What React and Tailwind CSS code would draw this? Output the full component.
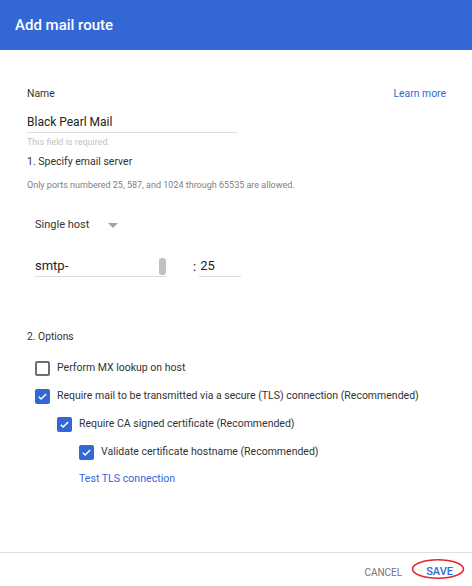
import React from "react";

function Check({ checked }) {
  return checked ? (
    <span className="w-[15px] h-[15px] rounded-[2px] bg-[#3367d6] flex items-center justify-center shrink-0">
      <svg width="11" height="11" viewBox="0 0 24 24">
        <path d="M4 12.5l5 5L20 6.5" fill="none" stroke="white" strokeWidth="3.4" />
      </svg>
    </span>
  ) : (
    <span className="w-[15px] h-[15px] rounded-[2px] border-2 border-[#6e6e6e] shrink-0" />
  );
}

function Option({ checked, indent, children }) {
  return (
    <div className={`h-[28px] flex items-center gap-[7px] ${indent}`}>
      <Check checked={checked} />
      <span className="text-[10.5px] text-[#333] whitespace-nowrap">{children}</span>
    </div>
  );
}

export default function App() {
  return (
    <div className="h-[586px] w-[472px] flex flex-col bg-white font-['Roboto',sans-serif]">
      {/* header */}
      <div className="h-[50px] bg-[#3367d6] flex items-center pl-[15px] shrink-0">
        <h1 className="text-white text-[15px] font-medium">Add mail route</h1>
      </div>

      <main className="flex-1 flex flex-col pl-[27px] pr-[26px]">
        <div className="mt-[34px] h-[20px] flex items-center justify-between">
          <span className="text-[10.4px] text-[#333]">Name</span>
          <a href="#" className="text-[10.4px] text-[#3367d6]">Learn more</a>
        </div>

        <div className="w-[210px] h-[29px] pt-[8px] flex items-center border-b border-[#dcdcdc]">
          <span className="text-[12px] text-[#222]">Black Pearl Mail</span>
        </div>
        <div className="mt-[3px] h-[14px] flex items-center text-[9px] text-[#c2c2c2]">
          This field is required.
        </div>
        <div className="mt-[3px] h-[18px] flex items-center text-[10.5px] text-[#333]">
          1. Specify email server
        </div>
        <div className="mt-[8px] h-[14px] flex items-center text-[9px] text-[#808080]">
          Only ports numbered 25, 587, and 1024 through 65535 are allowed.
        </div>

        <div className="mt-[22px] h-[20px] pl-[8px] flex items-center gap-[19px]">
          <span className="text-[11px] text-[#333]">Single host</span>
          <svg width="10" height="5" viewBox="0 0 10 5">
            <path d="M0 0h10L5 5z" fill="#a3a3a3" />
          </svg>
        </div>

        <div className="mt-[16px] pl-[8px] flex items-end">
          <div className="w-[131px] h-[26px] pt-[5px] flex items-center justify-between border-b border-[#dcdcdc]">
            <span className="text-[13px] text-[#222]">smtp-</span>
            <span className="w-[7px] h-[17px] rounded-[3px] bg-[#c1c1c1]" />
          </div>
          <span className="ml-[27px] h-[26px] pt-[5px] flex items-center text-[13px] text-[#222]">:</span>
          <div className="ml-[3px] w-[42px] h-[26px] pt-[5px] flex items-center border-b border-[#dcdcdc] pl-[1px]">
            <span className="text-[13px] text-[#222]">25</span>
          </div>
        </div>

        <div className="mt-[50px] h-[20px] flex items-center text-[10.3px] text-[#333]">
          2. Options
        </div>

        <div className="mt-[7px] flex flex-col">
          <Option checked={false} indent="pl-[8px]">Perform MX lookup on host</Option>
          <Option checked indent="pl-[8px]">
            Require mail to be transmitted via a secure (TLS) connection (Recommended)
          </Option>
          <Option checked indent="pl-[30px]">Require CA signed certificate (Recommended)</Option>
          <Option checked indent="pl-[52px]">Validate certificate hostname (Recommended)</Option>
        </div>

        <div className="mt-[3px] h-[20px] pl-[52px] flex items-center">
          <a href="#" className="text-[10.6px] text-[#3367d6]">Test TLS connection</a>
        </div>
      </main>

      {/* footer */}
      <div className="h-[34px] shrink-0 border-t border-[#e0e0e0] pt-[5px] pr-[19px] flex items-center justify-end">
        <button className="text-[10px] text-[#757575]">CANCEL</button>
        <div className="relative ml-[24px] h-[16px] flex items-center">
          <button className="text-[11px] text-[#3367d6] font-medium">SAVE</button>
          <svg
            className="absolute left-[-15px] top-[-6px] pointer-events-none"
            width="54"
            height="22"
            viewBox="0 0 54 22"
          >
            <ellipse cx="27" cy="11" rx="25.5" ry="9.2" fill="none" stroke="#e0282d" strokeWidth="1.6" />
          </svg>
        </div>
      </div>
    </div>
  );
}
